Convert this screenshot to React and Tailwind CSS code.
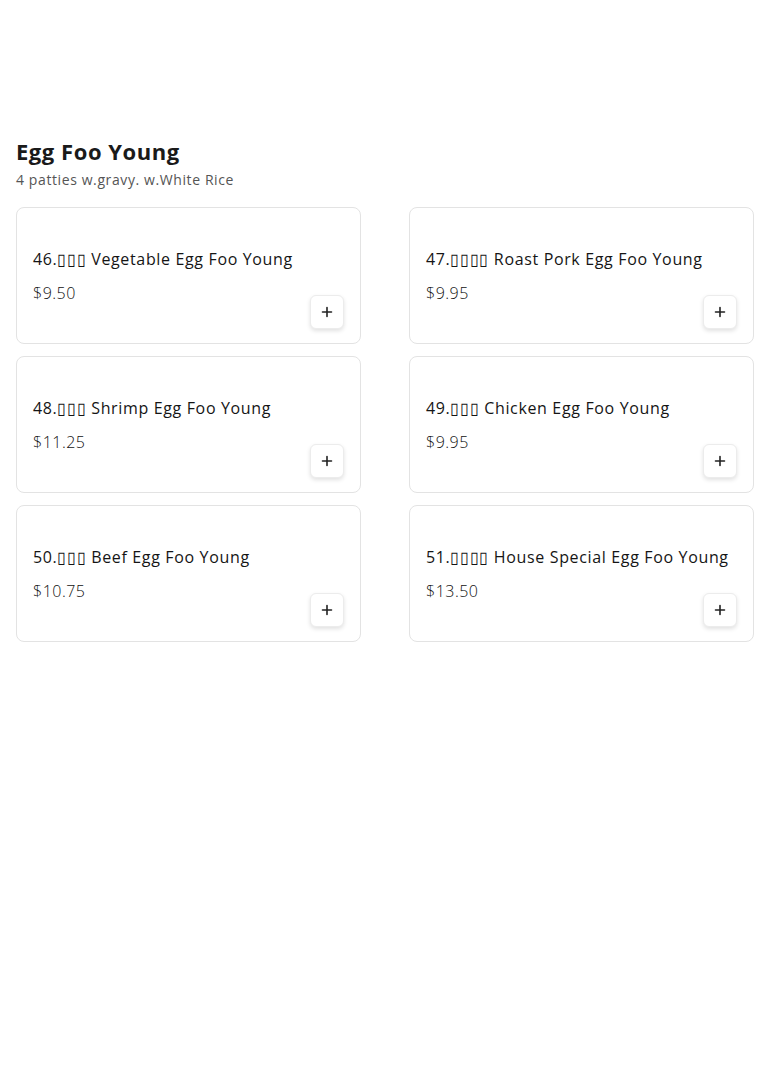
import React from "react";

const items = [
  { name: "46.▯▯▯ Vegetable Egg Foo Young", price: "$9.50" },
  { name: "47.▯▯▯▯ Roast Pork Egg Foo Young", price: "$9.95" },
  { name: "48.▯▯▯ Shrimp Egg Foo Young", price: "$11.25" },
  { name: "49.▯▯▯ Chicken Egg Foo Young", price: "$9.95" },
  { name: "50.▯▯▯ Beef Egg Foo Young", price: "$10.75" },
  { name: "51.▯▯▯▯ House Special Egg Foo Young", price: "$13.50" },
];

function PlusIcon() {
  return (
    <svg width="12" height="12" viewBox="0 0 12 12" fill="none" stroke="#222" strokeWidth="1.6" strokeLinecap="round">
      <path d="M6 1.5v9M1.5 6h9" />
    </svg>
  );
}

function ItemCard({ item }) {
  return (
    <div className="flex flex-col h-[137px] px-4 pt-[39px] pb-[14px] border border-[#e3e3e3] rounded-lg bg-white">
      <h3 className="text-[16px] leading-6 font-medium text-[#151515] tracking-[0.65px] whitespace-nowrap">{item.name}</h3>
      <div className="flex justify-between items-start mt-[10px]">
        <p className="text-[16px] leading-6 font-light text-[#111] tracking-[0.5px]">{item.price}</p>
        <button className="mt-[14px] w-[34px] h-[34px] flex items-center justify-center rounded-md border border-[#ececec] bg-white shadow-[0_2px_4px_rgba(0,0,0,0.12)]">
          <PlusIcon />
        </button>
      </div>
    </div>
  );
}

export default function App() {
  return (
    <div className="min-h-[1082px] bg-white px-4 pt-[135px] font-['Open_Sans',sans-serif]">
      <h2 className="text-[22px] leading-8 font-bold text-[#1a1a1a] tracking-[0.55px]">Egg Foo Young</h2>
      <p className="text-[14px] leading-5 text-[#555] tracking-[0.6px] mt-[3px]">4 patties w.gravy. w.White Rice</p>
      <div className="grid grid-cols-2 gap-x-12 gap-y-3 mt-[17px]">
        {items.map((item) => (
          <ItemCard key={item.name} item={item} />
        ))}
      </div>
    </div>
  );
}
